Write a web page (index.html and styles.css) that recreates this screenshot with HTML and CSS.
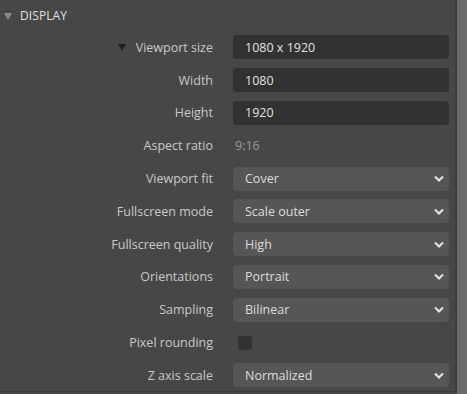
FILE: index.html
```html
<!DOCTYPE html>
<html>
<head>
<meta charset="utf-8">
<link rel="stylesheet" href="styles.css">
</head>
<body>
<div class="panel">
  <div class="header"><span class="tri"></span><span class="title">DISPLAY</span></div>
  <div class="grid">
    <div class="label"><span class="tri small"></span>Viewport size</div>
    <div class="input">1080 x 1920</div>

    <div class="label">Width</div>
    <div class="input">1080</div>

    <div class="label">Height</div>
    <div class="input">1920</div>

    <div class="label">Aspect ratio</div>
    <div class="value">9:16</div>

    <div class="label">Viewport fit</div>
    <div class="select">Cover<svg class="chev" viewBox="0 0 10 6"><path d="M1 1 L5 5 L9 1"/></svg></div>

    <div class="label">Fullscreen mode</div>
    <div class="select">Scale outer<svg class="chev" viewBox="0 0 10 6"><path d="M1 1 L5 5 L9 1"/></svg></div>

    <div class="label">Fullscreen quality</div>
    <div class="select">High<svg class="chev" viewBox="0 0 10 6"><path d="M1 1 L5 5 L9 1"/></svg></div>

    <div class="label">Orientations</div>
    <div class="select">Portrait<svg class="chev" viewBox="0 0 10 6"><path d="M1 1 L5 5 L9 1"/></svg></div>

    <div class="label">Sampling</div>
    <div class="select">Bilinear<svg class="chev" viewBox="0 0 10 6"><path d="M1 1 L5 5 L9 1"/></svg></div>

    <div class="label">Pixel rounding</div>
    <div class="check-cell"><span class="checkbox"></span></div>

    <div class="label">Z axis scale</div>
    <div class="select">Normalized<svg class="chev" viewBox="0 0 10 6"><path d="M1 1 L5 5 L9 1"/></svg></div>
  </div>
</div>
<div class="scrollbar"></div>
</body>
</html>
```
FILE: styles.css
```css
html, body {
  margin: 0;
  height: 394px;
  overflow: hidden;
}
body {
  background: #474747;
  display: flex;
  font-family: "Open Sans", "Noto Sans", sans-serif;
  font-size: 12px;
  color: #cfcfcf;
}
.panel {
  flex: 1;
  height: 391px;
  border-bottom: 1px solid #3a3a3a;
  border-right: 2px solid #3e3e3e;
}
.header {
  height: 31px;
  display: flex;
  align-items: center;
  padding-left: 4px;
}
.tri {
  width: 0;
  height: 0;
  border-left: 4px solid transparent;
  border-right: 4px solid transparent;
  border-top: 7px solid #8a8a8a;
  margin-right: 8px;
  margin-top: 1px;
}
.tri.small {
  border-top-color: #1f1f1f;
  margin-right: 10px;
}
.title {
  font-size: 12px;
  color: #e0e0e0;
  letter-spacing: 0.1px;
}
.grid {
  display: grid;
  grid-template-columns: 213px 216px;
  column-gap: 20px;
  grid-auto-rows: 32.8px;
  align-items: center;
}
.label {
  display: flex;
  justify-content: flex-end;
  align-items: center;
  color: #c9c9c9;
  font-size: 12.5px;
}
.input, .select {
  height: 24px;
  border-radius: 4px;
  display: flex;
  align-items: center;
  padding-left: 12px;
  box-sizing: border-box;
  font-size: 12.5px;
  color: #e2e2e2;
}
.input {
  background: #323232;
}
.select {
  background: #565656;
  justify-content: space-between;
  padding-right: 5px;
  color: #dcdcdc;
}
.chev {
  width: 10px;
  height: 7px;
  fill: none;
  stroke: #e6e6e6;
  stroke-width: 2;
}
.value {
  padding-left: 2px;
  color: #9a9a9a;
  font-size: 12.5px;
}
.check-cell {
  display: flex;
  align-items: center;
  padding-left: 5px;
}
.checkbox {
  width: 14px;
  height: 14px;
  border-radius: 3px;
  background: #323232;
}
.scrollbar {
  width: 10px;
  height: 394px;
  background: #6a6a6a;
}
```
